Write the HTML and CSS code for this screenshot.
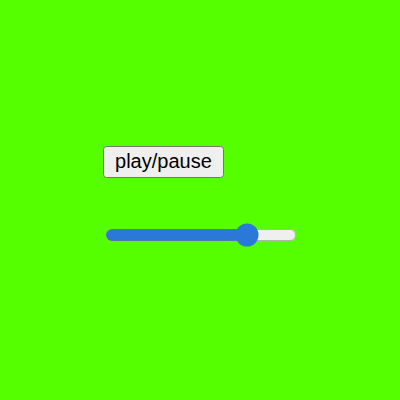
FILE: index.html
```html
<!DOCTYPE html>
<html>
<head>
<meta charset="utf-8">
<link rel="stylesheet" href="styles.css">
</head>
<body>
<div class="stage">
  <button class="toggle">play/pause</button>
  <input class="seek" type="range" min="0" max="100" value="77">
</div>
</body>
</html>
```
FILE: styles.css
```css
html, body {
  margin: 0;
  height: 100%;
  background: #55ff00;
}
.stage {
  zoom: 1.5;
  padding: 97px 0 0 68.7px;
  display: flex;
  flex-direction: column;
  align-items: flex-start;
  gap: 30px;
}
.toggle {
  font-family: "Liberation Sans", Arial, sans-serif;
  margin: 0;
}
.seek {
  margin: 0 0 0 1.5px;
  width: 128px;
  accent-color: #2a78d8;
}
```
